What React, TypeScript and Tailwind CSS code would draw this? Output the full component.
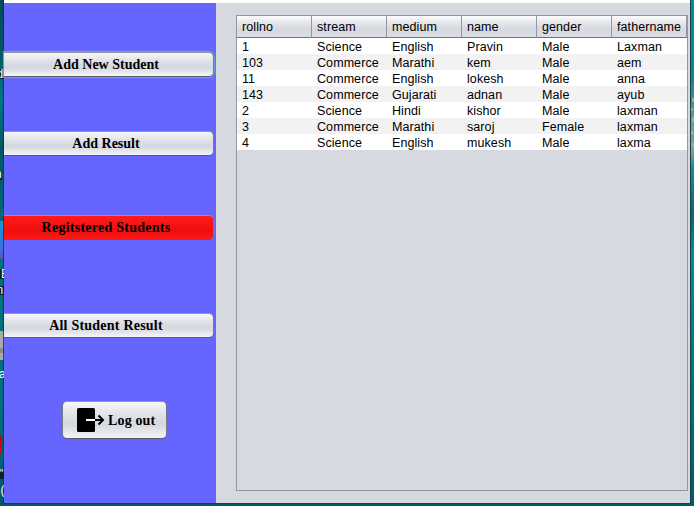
import { clsx } from "clsx";

const columns = ["rollno", "stream", "medium", "name", "gender", "fathername"];

const students = [
  ["1", "Science", "English", "Pravin", "Male", "Laxman"],
  ["103", "Commerce", "Marathi", "kem", "Male", "aem"],
  ["11", "Commerce", "English", "lokesh", "Male", "anna"],
  ["143", "Commerce", "Gujarati", "adnan", "Male", "ayub"],
  ["2", "Science", "Hindi", "kishor", "Male", "laxman"],
  ["3", "Commerce", "Marathi", "saroj", "Female", "laxman"],
  ["4", "Science", "English", "mukesh", "Male", "laxma"],
];

const silver =
  "bg-[linear-gradient(to_bottom,#f6f7f9_0%,#e3e5ea_30%,#d6d9df_55%,#d6d9df_65%,#f3f5fa_100%)]";

function MenuButton({ label, focused, danger, className }: { label: string; focused?: boolean; danger?: boolean; className: string }) {
  return (
    <button
      className={clsx(
        "flex h-[25px] w-[210px] shrink-0 items-center justify-center rounded-r-[5px] border border-l-0 border-t-[#9297a1] border-r-[#747986] border-b-[#565b68] pr-[5px] text-[14px] leading-none font-bold",
        danger ? "bg-[linear-gradient(to_bottom,#ff1c1c_0%,#fa1414_35%,#ec0f0f_60%,#ff1717_100%)]" : silver,
        focused && "shadow-[0_0_1px_1px_#73a4d1]",
        className,
      )}
    >
      {label}
    </button>
  );
}

function LogoutIcon() {
  return (
    <svg width="28" height="24" viewBox="0 0 28 24" fill="none">
      <rect width="18" height="24" rx="1.5" fill="#000" />
      <path d="M9 12h9" stroke="#fff" strokeWidth="2" />
      <path d="M18 12h8M21.5 7.5 26 12l-4.5 4.5" stroke="#000" strokeWidth="2" />
    </svg>
  );
}

/* Slice of the desktop that shows beside the window's left edge. */
function DesktopLeft() {
  return (
    <svg width="4" height="506" viewBox="0 0 4 506" className="shrink-0" fontFamily="Liberation Sans, sans-serif" fontSize="12">
      <defs>
        <linearGradient id="sea" x1="0" y1="0" x2="0" y2="1">
          <stop offset="0" stopColor="#004c5a" />
          <stop offset=".12" stopColor="#00586a" />
          <stop offset=".19" stopColor="#007785" />
          <stop offset=".3" stopColor="#005664" />
          <stop offset=".5" stopColor="#00727e" />
          <stop offset=".8" stopColor="#006e80" />
          <stop offset="1" stopColor="#005868" />
        </linearGradient>
        <linearGradient id="tile" x1="0" y1="0" x2="0" y2="1">
          <stop offset="0" stopColor="#1599d4" />
          <stop offset=".6" stopColor="#3179df" />
          <stop offset="1" stopColor="#5558ba" />
        </linearGradient>
      </defs>
      <rect width="4" height="506" fill="url(#sea)" />
      <rect y="221" width="4" height="38" fill="url(#tile)" />
      <rect y="331" width="4" height="29" fill="#aaaaa8" />
      <rect y="348" width="4" height="5" fill="#8b8b8b" />
      <rect y="435" width="2" height="18" fill="#d5000b" />
      <rect x="3" width="1" height="504" fill="#12323c" fillOpacity=".8" />
      <g fill="#fff">
        <rect y="69" width="4" height="10" fill="#06242b" />
        <text x="-3.5" y="78">d</text>
        <rect y="171" width="2" height="9" fill="#06242b" />
        <text x="-5" y="178">n</text>
        <rect y="269" width="4" height="10" fill="#06242b" />
        <text x="1" y="278">E</text>
        <rect y="286" width="4" height="9" fill="#06242b" />
        <text x="-3.5" y="294">n</text>
        <text x="-1" y="378">a</text>
        <rect y="469" width="4" height="10" fill="#06242b" />
        <text x="-1" y="478">"</text>
        <text x="0.5" y="494">(</text>
      </g>
    </svg>
  );
}

/* Slice of the desktop on the right: deep water, a wave crest, then open sea. */
function DesktopRight() {
  return (
    <svg width="4" height="506" viewBox="0 0 4 506" className="shrink-0">
      <defs>
        <linearGradient id="coast" x1="0" y1="0" x2="0" y2="1">
          <stop offset="0" stopColor="#008ba0" />
          <stop offset=".15" stopColor="#12818e" />
          <stop offset=".2" stopColor="#4b8b90" />
          <stop offset=".25" stopColor="#739a9d" />
          <stop offset=".3" stopColor="#839f9d" />
          <stop offset=".33" stopColor="#1a8c98" />
          <stop offset=".42" stopColor="#10646d" />
          <stop offset=".5" stopColor="#008c98" />
          <stop offset="1" stopColor="#005a69" />
        </linearGradient>
      </defs>
      <rect width="4" height="506" fill="url(#coast)" />
      <path d="M2 98h2v4H2zM1 108h2v3H1zM2 117h2v5H2zM1 131h2v3H1zM2 143h2v4H2z" fill="#a8bcba" fillOpacity=".7" />
      <rect width="1" height="504" fill="#173f48" />
    </svg>
  );
}

export default function App() {
  return (
    <div className="flex h-[506px] w-[694px] overflow-hidden bg-[#005866] text-black">
      <DesktopLeft />
      <div className="flex h-[506px] w-[686px] shrink-0 flex-col">
        <div className="h-[3px] shrink-0 bg-white" />
        <div className="flex h-[500px] shrink-0">
          <nav className="flex w-[212px] shrink-0 flex-col items-start bg-[#6666ff] font-['Liberation_Serif',serif]">
            <MenuButton label="Add New Student" focused className="mt-[49px]" />
            <MenuButton label="Add Result" className="mt-[54px]" />
            <MenuButton label="Regitstered Students" danger className="mt-[59px] tracking-[0.25px]" />
            <MenuButton label="All Student Result" className="mt-[73px] tracking-[0.22px]" />
            <button
              className={clsx(
                "mt-[63px] ml-[58px] flex h-[38px] w-[105px] shrink-0 items-center gap-[3px] rounded-[5px] border border-t-[#9297a1] border-r-[#747986] border-b-[#565b68] border-l-[#747986] pl-[14px] text-[14px] leading-none font-bold tracking-[0.15px] whitespace-nowrap",
                silver,
              )}
            >
              <LogoutIcon />
              <span className="pt-0.5">Log out</span>
            </button>
          </nav>
          <main className="flex w-[474px] flex-col bg-[#d6d9df] pt-3 pl-5 font-['Liberation_Sans',Arial,sans-serif] text-[12.5px] tracking-[0.08px]">
            <div className="h-[476px] w-[452px] border border-[#9297a1]">
              <table className="w-[450px] table-fixed border-separate border-spacing-0">
                <thead>
                  <tr className="h-[22px] bg-[linear-gradient(to_bottom,#fafbfc_0%,#e5e7eb_30%,#d6d9df_60%,#dcdfe5_100%)]">
                    {columns.map((name) => (
                      <th key={name} className="h-[22px] border-r border-b border-r-[#9297a1] border-b-[#70747f] p-0 pl-[5px] text-left leading-[20px] font-normal">
                        {name}
                      </th>
                    ))}
                  </tr>
                </thead>
                <tbody>
                  {students.map((student, row) => (
                    <tr key={student[0]} className={clsx("h-4", row % 2 ? "bg-[#f2f2f2]" : "bg-white")}>
                      {student.map((value, i) => (
                        <td key={i} className="h-4 p-0 pt-0.5 pl-[5px] leading-[14px]">
                          {value}
                        </td>
                      ))}
                    </tr>
                  ))}
                </tbody>
              </table>
            </div>
          </main>
        </div>
        <div className="h-px shrink-0 bg-[#173f48]" />
        <div className="h-0.5 shrink-0 bg-[#005866]" />
      </div>
      <DesktopRight />
    </div>
  );
}
